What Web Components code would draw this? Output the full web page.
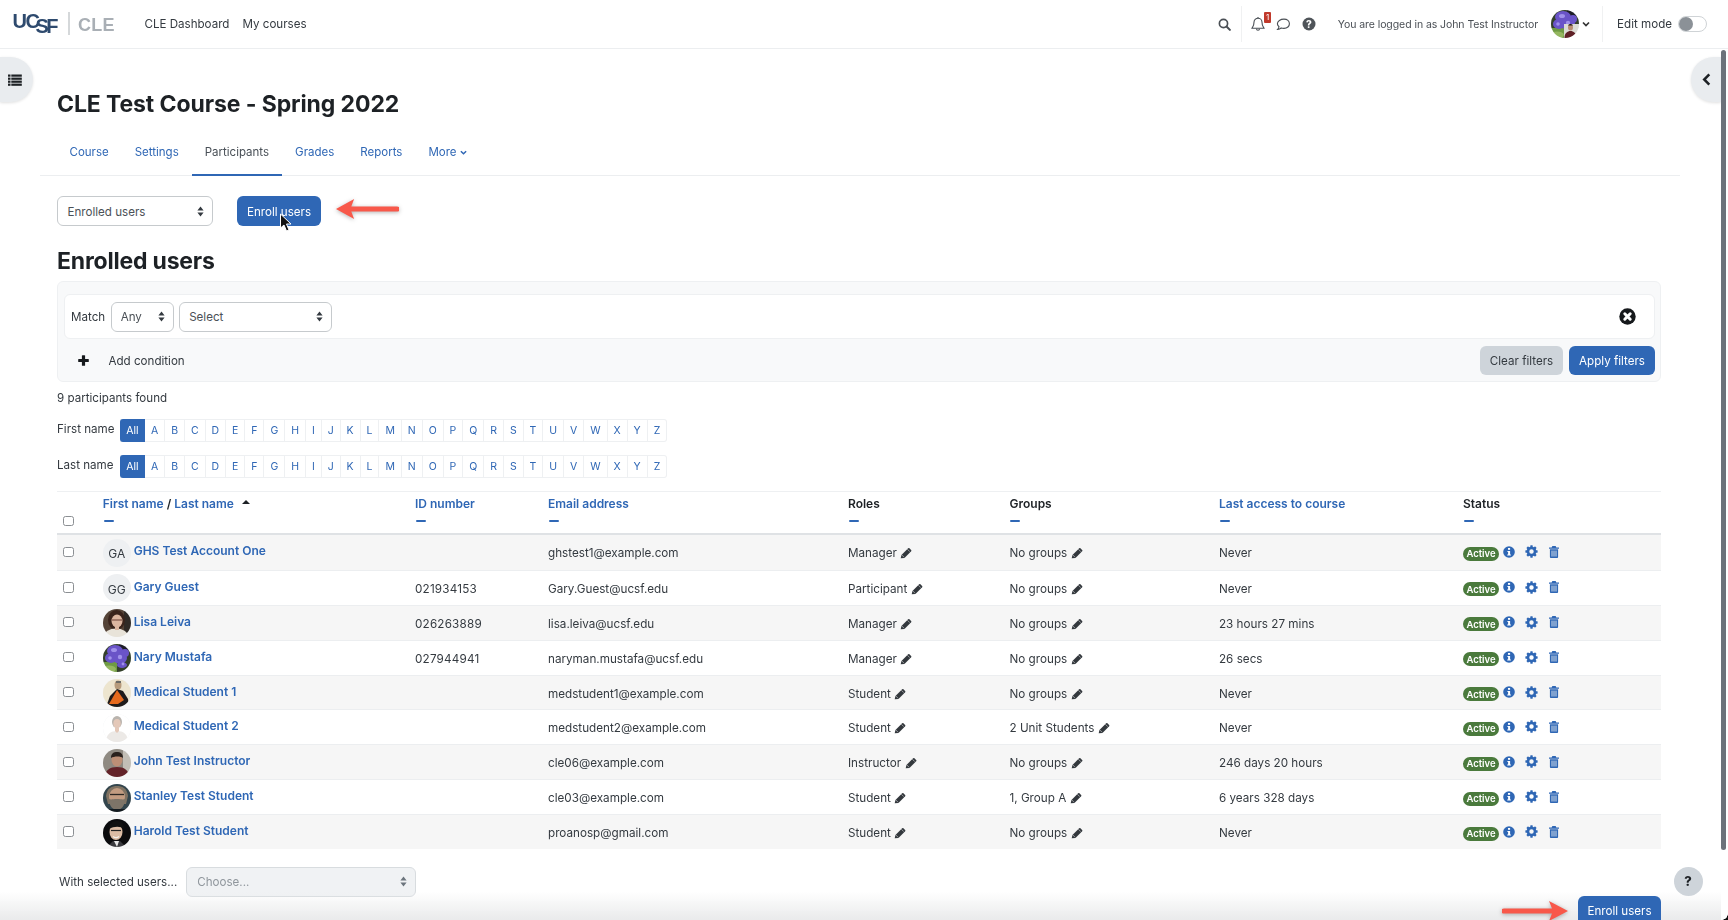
<!DOCTYPE html>
<html lang="en"><head><meta charset="utf-8"><title>Participants</title>
<style>
html,body{margin:0;padding:0;width:1728px;height:920px;overflow:hidden;background:#fff;font-family:Inter,"Liberation Sans",sans-serif;color:#1d2125}
</style></head><body>
<app-page></app-page>
<script>
const BLUE='#2f67b5';
const I={
search:(s=13,c='#4a4f55')=>`<svg width="${s}" height="${s}" viewBox="0 0 14 14" fill="none" stroke="${c}"><circle cx="5.900" cy="5.900" r="4.400" stroke-width="1.800"/><path d="M9.200 9.200 12.800 12.800" stroke-width="2.200" stroke-linecap="round"/></svg>`,
bell:`<svg width="14" height="16" viewBox="0 0 14 15" fill="none" stroke="#4a4f55" stroke-width="1.100"><path d="M7 1.700a4 4 0 0 0-4 4c0 3.800-1.400 5-2 6h12c-.6-1-2-2.200-2-6a4 4 0 0 0-4-4z"/><path d="M5.500 12.200a1.500 1.500 0 0 0 3 0"/><path d="M7 .6v1.100"/></svg>`,
comment:`<svg width="15" height="15" viewBox="0 0 16 15" fill="none" stroke="#4a4f55" stroke-width="1.200"><path d="M8.500 1.800C4.800 1.800 1.500 3.900 1.500 6.700c0 1.300.7 2.400 1.700 3.200-.2 1.100-.7 2-1.400 2.800 1.400-.1 2.700-.7 3.700-1.500.9.3 2 .4 3 .4 3.500 0 5.800-2.200 5.800-4.900s-2.300-4.900-5.800-4.900z"/></svg>`,
help:`<svg width="14" height="14" viewBox="0 0 14 14"><circle cx="7" cy="7" r="6.500" fill="#4f5459"/><text x="7" y="10.600" text-anchor="middle" font-family="Inter,sans-serif" font-size="10" font-weight="800" fill="#fff">?</text></svg>`,
chev:(c='#333',s=8)=>`<svg width="${s}" height="${s}" viewBox="0 0 8 8" fill="none" stroke="${c}" stroke-width="1.700"><path d="M1 2.500 4 5.500 7 2.500"/></svg>`,
updown:(c='#343a40')=>`<svg width="7" height="11" viewBox="0 0 7 11" fill="${c}"><path d="M3.500 .6 6.600 4.500H.4zM3.500 10.400.4 6.500h6.200z"/></svg>`,
pencil:`<svg width="12" height="12" viewBox="0 0 14 14"><path fill="#33383d" d="M.8 13.200l.9-3.900L9.500 1.500a1.100 1.100 0 0 1 1.500 0l2 2a1.100 1.100 0 0 1 0 1.500L5.200 12.800z"/><path stroke="#fff" stroke-width=".6" d="M2 9.200 4.800 12M8.600 2.600 11.400 5.400"/></svg>`,
info:`<svg width="12" height="12" viewBox="0 0 12 12"><circle cx="6" cy="6" r="5.800" fill="${BLUE}"/><rect x="5" y="2" width="2.100" height="1.800" fill="#fff"/><path fill="#fff" d="M4.400 4.900h2.700v3.500h.8v1.100H4.200V8.400h.9V6H4.400z"/></svg>`,
gear:`<svg width="13" height="13" viewBox="0 0 14 14" fill="${BLUE}"><circle cx="7" cy="7" r="3.800" fill="none" stroke="${BLUE}" stroke-width="2.800"/>${[0,45,90,135,180,225,270,315].map(a=>`<rect x="5.700" y=".4" width="2.600" height="3" rx=".4" transform="rotate(${a} 7 7)"/>`).join('')}</svg>`,
trash:`<svg width="10" height="12" viewBox="0 0 11 13"><path fill="${BLUE}" d="M3.700 0h3.600l.8 1.600H11v1.300H0V1.600h2.900zM1 3.600h9V12a1 1 0 0 1-1 1H2a1 1 0 0 1-1-1z"/><path stroke="#f6f6f6" stroke-width=".9" d="M3.300 5v6.500M5.500 5v6.500M7.700 5v6.500"/></svg>`,
list:`<svg width="14" height="12" viewBox="0 0 14 12" fill="#1d2125"><rect x="0" y=".5" width="2.500" height="2.200"/><rect x="0" y="3.600" width="2.500" height="2.200"/><rect x="0" y="6.600" width="2.500" height="2.200"/><rect x="0" y="9.600" width="2.500" height="2.200"/><rect x="3.300" y=".5" width="10.500" height="2.200"/><rect x="3.300" y="3.600" width="10.500" height="2.200"/><rect x="3.300" y="6.600" width="10.500" height="2.200"/><rect x="3.300" y="9.600" width="10.500" height="2.200"/></svg>`,
back:`<svg width="9" height="13" viewBox="0 0 9 13" fill="none" stroke="#1d2125" stroke-width="2.500"><path d="M7.300 1.300 2.200 6.500 7.300 11.700"/></svg>`,
xc:`<svg width="17" height="17" viewBox="0 0 17 17"><circle cx="8.500" cy="8.500" r="8.200" fill="#16191c"/><path stroke="#fff" stroke-width="3" stroke-linecap="round" d="M5.800 5.800 11.200 11.200M11.200 5.800 5.800 11.200"/></svg>`,
plus:`<svg width="11" height="11" viewBox="0 0 11 11" fill="#16191c"><rect x="3.900" y=".2" width="3.200" height="10.600" rx=".6"/><rect x=".2" y="3.900" width="10.600" height="3.200" rx=".6"/></svg>`
};
const flower=`<rect width="28" height="28" fill="#34402a"/><rect y="18" width="14" height="10" fill="#6f9a44"/><ellipse cx="6" cy="25" rx="7" ry="3.500" fill="#95b760"/><rect x="16" width="12" height="6" fill="#1e1e28"/><g fill="#6a54c8"><ellipse cx="12" cy="7" rx="8" ry="6"/><ellipse cx="8" cy="14" rx="6" ry="5"/><ellipse cx="17" cy="14" rx="7" ry="6"/><ellipse cx="22" cy="9" rx="4" ry="4"/><ellipse cx="19" cy="21" rx="5" ry="3"/></g><g fill="#a091ea"><ellipse cx="11" cy="6" rx="3" ry="2"/><circle cx="17" cy="13" r="2.200"/><circle cx="7" cy="14" r="1.800"/><circle cx="20" cy="20" r="1.400"/></g>`;
const AV={
lisa:`<rect width="28" height="28" fill="#544337"/><rect x="21" width="7" height="28" fill="#2f2a26"/><ellipse cx="13.500" cy="11" rx="8.500" ry="10" fill="#3a241c"/><ellipse cx="14" cy="12" rx="5.500" ry="6.500" fill="#dcb6a0"/><path d="M9 11h10" stroke="#6a3f35" stroke-width="1"/><ellipse cx="13" cy="27" rx="12" ry="7.500" fill="#e8e3d9"/><rect x="12" y="17" width="4" height="4" fill="#dcb6a0"/>`,
nary:flower,
med1:`<rect width="28" height="28" fill="#ede5cf"/><ellipse cx="15" cy="6" rx="3.500" ry="4.500" fill="#b79b7c"/><path d="M13 2h5v2h-5z" fill="#6b6b66"/><path d="M3 28 7 17 14 10 20 12 25 20 26 28z" fill="#1f1b1b"/><path d="M6 25 14 11 21 21 15 25z" fill="#e56a1e"/>`,
med2:`<rect width="28" height="28" fill="#fff"/><ellipse cx="14" cy="8" rx="5" ry="6" fill="#b9b4ae"/><ellipse cx="14" cy="9.500" rx="3.700" ry="4.500" fill="#e4c8b8"/><path d="M3 28c0-8 5-11 11-11s11 3 11 11z" fill="#ece9e6"/><path d="M12 14h4v3l-2 2-2-2z" fill="#e4c8b8"/>`,
john:`<rect width="28" height="28" fill="#8f8a82"/><rect x="20" width="8" height="28" fill="#c2beb6"/><ellipse cx="14" cy="11" rx="5.500" ry="6.500" fill="#bd8f76"/><path d="M8 9c0-5 3-6 6-6s6 1 6 6c-2-2-9-2-12 0z" fill="#2a211d"/><path d="M2 28c0-7 5-10 12-10s12 3 12 10z" fill="#632329"/>`,
stanley:`<rect width="28" height="28" fill="#33454d"/><path d="M3 12c1-8 6-10 11-10s10 2 11 10l-2 8H5z" fill="#7f7262"/><ellipse cx="14" cy="13" rx="8" ry="9" fill="#c39c81"/><path d="M7 10.500h14" stroke="#2c2825" stroke-width="1.300"/><path d="M6 15c2 1 4 0 8 0s6 1 8 0c0 7-4 11-8 11s-8-4-8-11z" fill="#7d7468"/><rect y="25" width="28" height="3" fill="#141b20"/>`,
harold:`<rect width="28" height="28" fill="#0b0b0d"/><ellipse cx="13" cy="13" rx="6.500" ry="8" fill="#dcbca4"/><path d="M6 10c0-6 4-8 8-8s7 2 7 8c-3-3-10-3-15 0z" fill="#111"/><path d="M8 11.500h10" stroke="#222" stroke-width="1.200"/><path d="M10 17.500c2 1.500 4 1.500 6 0" stroke="#f5f0ea" stroke-width="1.200" fill="none"/><path d="M4 28l6-6h7l6 6z" fill="#3a3a3e"/><path d="M11 22h5l-2 6z" fill="#e8e8e8"/>`,
self:flower+`<rect x="13" y="14" width="15" height="14" fill="#dcdcd6"/><ellipse cx="19.500" cy="17.500" rx="2.500" ry="3" fill="#b98c72"/><path d="M17 15.500c1-2 4-2 5 0z" fill="#221b18"/><path d="M13.500 28c0-5 3-7 6-7s6 2 6 7z" fill="#5f2026"/>`
};
class Base extends HTMLElement{
  constructor(){super();this.attachShadow({mode:'open'})}
  html(css,body){this.shadowRoot.innerHTML=`<style>${css}</style>${body}`}
  a(n,d=''){const v=this.getAttribute(n);return v==null?d:v}
}
class UAvatar extends Base{connectedCallback(){
  const k=this.a('kind'),t=this.a('initials'),s=this.a('size','28');
  this.html(`:host{display:block;width:${s}px;height:${s}px;border-radius:50%;overflow:hidden;background:#eef0f2;flex:none}
  div{width:100%;height:100%;display:flex;align-items:center;justify-content:center;font-size:12px;color:#343a40;padding-top:2px;box-sizing:border-box}svg{display:block;filter:blur(.5px)}`,
  k?`<svg width="${s}" height="${s}" viewBox="0 0 28 28">${AV[k]}</svg>`:`<div>${t}</div>`);
}}
class XSelect extends Base{connectedCallback(){
  const dis=this.hasAttribute('disabled');
  this.html(`:host{display:flex;box-sizing:border-box;align-items:center;justify-content:space-between;width:${this.a('w')}px;height:${this.a('h','30')}px;padding:0 ${this.a('pr','8')}px 0 ${this.a('pl','9')}px;border:1px solid ${dis?'#d8dcdf':'#c6cacd'};border-radius:6px;background:${dis?'#f0f2f4':'#fff'};color:${dis?'#8f969c':'#4b5157'};font-size:11.600px}
  span{padding-top:1px}`,
  `<span>${this.a('label')}</span>${I.updown(dis?'#6c757d':'#343a40')}`);
}}
class XBtn extends Base{connectedCallback(){
  const g=this.hasAttribute('secondary');
  this.html(`:host{display:flex;box-sizing:border-box;align-items:center;justify-content:center;width:${this.a('w')}px;height:${this.a('h','29')}px;padding-top:1px;border-radius:6px;background:${g?'#ced4da':BLUE};color:${g?'#343a40':'#fff'};font-size:11.600px;white-space:nowrap}`,`<slot></slot>`);
}}
class CleLogo extends Base{connectedCallback(){
  this.html(`:host{display:flex;align-items:flex-start;height:48px;padding-left:12.500px;font-family:"Liberation Sans",sans-serif;flex:none}
  .u{display:flex;color:#2e4a6e;font-weight:700;font-size:20px;line-height:1;letter-spacing:-1.500px;width:46px;padding-top:11px}
  .u i{font-style:normal;display:block}.s{position:relative;top:5px;margin-left:-3px}.f{position:relative;top:5px;margin-left:-1px}
  .sep{width:2px;height:23px;background:#d5d8da;margin:12px 8px 0 9.500px}
  .c{font-size:18px;line-height:1;font-weight:700;color:#a9afb5;padding-top:16px;letter-spacing:.3px}`,
  `<div class="u"><i>U</i><i>C</i><i class="s">S</i><i class="f">F</i></div><div class="sep"></div><div class="c">CLE</div>`);
}}
class AppHeader extends Base{connectedCallback(){
  this.html(`:host{display:flex;box-sizing:border-box;height:49px;border-bottom:1px solid #eceef0;align-items:center;background:#fff;font-size:11.600px;color:#343a40}
  nav{display:flex;gap:13px;margin-left:29.500px;flex:1}
  .ic{display:flex;align-items:center}
  .sep{width:1px;height:36px;background:#f0f1f2}
  .bell{position:relative;display:flex}
  .bd{position:absolute;left:13.500px;top:-4px;width:7px;height:11px;background:#c0392b;color:#fff;font-size:8px;line-height:11px;text-align:center;border-radius:1px}
  .t{font-size:10.500px;letter-spacing:-.07px;color:#4a4f55;white-space:nowrap}
  .sw{width:29px;height:16px;box-sizing:border-box;border:1px solid #cfd3d6;border-radius:8px;position:relative;background:#fff;margin-left:6px}
  .sw i{position:absolute;left:0;top:0;width:14px;height:14px;border-radius:50%;background:#8b9197}
  `,`<cle-logo></cle-logo><nav><span>CLE Dashboard</span><span>My courses</span></nav>
  <div class="ic" style="margin-right:10.500px">${I.search()}</div><div class="sep"></div>
  <div class="bell" style="margin-left:8.500px">${I.bell}<span class="bd">1</span></div>
  <div class="ic" style="margin-left:11px">${I.comment}</div>
  <div class="ic" style="margin-left:11px">${I.help}</div>
  <span class="t" style="margin-left:22px">You are logged in as John Test Instructor</span>
  <u-avatar kind="self" style="margin-left:13px"></u-avatar>
  <div class="ic" style="margin-left:3px">${I.chev()}</div>
  <div class="sep" style="margin-left:12px"></div>
  <span style="margin-left:14px">Edit mode</span><div class="sw" style="margin-right:21px"><i></i></div>`);
}}
class CourseTabs extends Base{connectedCallback(){
  this.html(`:host{display:flex;box-sizing:border-box;height:44px;margin:13px -19px 0 -17px;padding-left:16.500px;border-bottom:1px solid #eceef0;font-size:11.500px;color:${BLUE}}
  a{display:flex;align-items:flex-start;padding:11px 13px 0;line-height:18px;height:44px;box-sizing:border-box;gap:3px}
  a.on{color:#495057;border-bottom:2px solid ${BLUE}}
  svg{margin-top:5.500px}`,
  `<a>Course</a><a>Settings</a><a class="on">Participants</a><a>Grades</a><a>Reports</a><a>More${I.chev(BLUE,7)}</a>`);
}}
class FilterBox extends Base{connectedCallback(){
  this.html(`:host{display:block;box-sizing:border-box;height:101px;margin-top:4.500px;padding:12.500px 5px 0 5.500px;background:#f8f9fa;border:1px solid #eef0f2;border-radius:6px;font-size:11.600px;color:#343a40}
  .r{display:flex;align-items:center;height:45px;box-sizing:border-box;background:#fff;border:1px solid #eef0f2;border-radius:6px;padding:0 18px 0 6.500px;gap:5.500px}
  .x{margin-left:auto;display:flex}
  .b{display:flex;align-items:center;margin-top:7px}
  .b .p{display:flex;margin-left:14px}.b .l{margin-left:20px;flex:1}
  x-btn+x-btn{margin-left:6px}`,
  `<div class="r"><span>Match</span><x-select label="Any" w="63" h="30" pr="8"></x-select><x-select label="Select" w="153" h="30"></x-select><span class="x">${I.xc}</span></div>
  <div class="b"><span class="p">${I.plus}</span><span class="l">Add condition</span><x-btn secondary w="83">Clear filters</x-btn><x-btn w="86">Apply filters</x-btn></div>`);
}}
class AlphaBar extends Base{connectedCallback(){
  const L='ABCDEFGHIJKLMNOPQRSTUVWXYZ'.split('');
  this.html(`:host{display:flex;align-items:center;height:23px;font-size:11.600px;color:#343a40;margin-top:${this.a('mt','0')}px}
  .lb{width:${this.a('lw','63')}px;padding-bottom:4px;flex:none}
  .bar{display:flex;height:23px;border:1px solid #eef0f2;border-left:0;border-radius:0 3px 3px 0;box-sizing:border-box;color:${BLUE};font-size:10.500px;width:547px}
  .bar a{flex:1 1 auto;display:flex;align-items:center;justify-content:center;border-right:1px solid #eef0f2;padding:0 3px}
  .bar a:last-child{border-right:0}
  .bar a.all{flex:none;width:25px;padding:0;box-sizing:border-box;background:${BLUE};color:#fff;border:0;border-radius:3px 0 0 3px;margin:-1px 0}`,
  `<span class="lb">${this.a('label')}</span><div class="bar"><a class="all">All</a>${L.map(c=>`<a>${c}</a>`).join('')}</div>`);
}}
const COLS='45.700px 312.300px 133px 300px 161.500px 209.500px 244px 198px';
class TableHead extends Base{connectedCallback(){
  const h=(t,on)=>`<div class="h"><div class="t ${on?'lk':''}">${t}</div><i></i></div>`;
  this.html(`:host{display:grid;grid-template-columns:${COLS};height:44px;box-sizing:border-box;border-top:1px solid #eef0f2;border-bottom:2px solid #dfe2e5;margin-top:13px;font-size:12px;font-weight:600;color:#1d2125}
  .h{padding-top:4px;position:relative}.t{line-height:15px;white-space:nowrap}.lk{color:${BLUE}}.t b{color:#1d2125;font-weight:600}
  .h i{display:block;width:10px;height:2.500px;background:${BLUE};border-radius:1px;margin:8.500px 0 0 1px}
  .c{display:flex;align-items:flex-start;padding:23.500px 0 0 6px}
  .cb{width:10.500px;height:10.500px;border:1.200px solid #8b8f93;border-radius:2.500px;background:#fff;box-sizing:border-box}
  .up{display:inline-block;width:0;height:0;border:4px solid transparent;border-bottom:4.500px solid #1d2125;border-top:0;margin-left:5px;vertical-align:4px}`,
  `<div class="c"><div class="cb"></div></div>`+h('First name <b>/</b> Last name <span class="up"></span>',1)+h('ID number',1)+h('Email address',1)+h('Roles')+h('Groups')+h('Last access to course',1)+h('Status'));
}}
class UserRow extends Base{connectedCallback(){
  const av=this.a('av');
  this.html(`:host{display:grid;grid-template-columns:${COLS};height:34.900px;box-sizing:border-box;border-top:1px solid #eceef0;align-items:center;font-size:11.700px;color:#343a40}
  :host([striped]){background:#f6f6f6}
  :host(:first-of-type){border-top:0}
  .c{padding-left:6px}.cb{width:10.500px;height:10.500px;border:1.200px solid #8b8f93;border-radius:2.500px;background:#fff;box-sizing:border-box;margin-bottom:1px}
  .n{display:flex;align-items:center;gap:3px}.n b{color:${BLUE};font-weight:600;font-size:12px;margin-bottom:3px;white-space:nowrap}
  .d{padding-top:2px;white-space:nowrap;display:flex;align-items:center;gap:3.500px}
  .id{letter-spacing:.2px}
  .s{display:flex;align-items:center;height:100%}
  .ac{width:36px;height:14px;border-radius:7px;background:#4a7a3c;color:#fff;font-size:9.500px;font-weight:600;display:flex;align-items:center;justify-content:center;margin-top:3px}
  .s svg{display:block;margin-bottom:1px}`,
  `<div class="c"><div class="cb"></div></div><div class="n"><u-avatar ${av.length>2?`kind="${av}"`:`initials="${av}"`} style="margin-top:1px"></u-avatar><b>${this.a('name')}</b></div>
  <div class="d id">${this.a('uid')}</div><div class="d">${this.a('email')}</div>
  <div class="d">${this.a('role')} ${I.pencil}</div><div class="d">${this.a('grp')} ${I.pencil}</div><div class="d">${this.a('acc')}</div>
  <div class="s"><span class="ac">Active</span><span style="margin-left:4.500px">${I.info}</span><span style="margin-left:10px">${I.gear}</span><span style="margin-left:11px">${I.trash}</span></div>`);
}}
class RedArrow extends Base{connectedCallback(){
  const d=this.a('dir'),w=this.a('w','66');
  this.html(`:host{position:absolute;display:block;filter:drop-shadow(0 1px 2px rgba(0,0,0,.3))}svg{display:block}`,
  `<svg width="${w}" height="20" viewBox="0 0 66 20" preserveAspectRatio="none" style="${d=='r'?'':'transform:scaleX(-1)'}"><path d="M2 7.400H50L47 0 66 10 47 20 50 12.600H2A2.600 2.600 0 0 1 2 7.400z" fill="#f8584a"/></svg>`);
}}
class AppPage extends Base{connectedCallback(){
  const R=[
  ['GA','GHS Test Account One','','ghstest1@example.com','Manager','No groups','Never'],
  ['GG','Gary Guest','021934153','Gary.Guest@ucsf.edu','Participant','No groups','Never'],
  ['lisa','Lisa Leiva','026263889','lisa.leiva@ucsf.edu','Manager','No groups','23 hours 27 mins'],
  ['nary','Nary Mustafa','027944941','naryman.mustafa@ucsf.edu','Manager','No groups','26 secs'],
  ['med1','Medical Student 1','','medstudent1@example.com','Student','No groups','Never'],
  ['med2','Medical Student 2','','medstudent2@example.com','Student','2 Unit Students','Never'],
  ['john','John Test Instructor','','cle06@example.com','Instructor','No groups','246 days 20 hours'],
  ['stanley','Stanley Test Student','','cle03@example.com','Student','1, Group A','6 years 328 days'],
  ['harold','Harold Test Student','','proanosp@gmail.com','Student','No groups','Never']];
  this.html(`:host{display:block;position:relative;width:1728px;height:920px;overflow:hidden;filter:blur(.4px)}
  main{padding:0 67px 0 57px}
  h1{margin:40px 0 0;font-size:23px;line-height:30px;font-weight:700;color:#1d2125;letter-spacing:-.1px}
  h2{margin:20px 0 0;font-size:23px;line-height:30px;font-weight:700;color:#1d2125;letter-spacing:-.2px}
  .act{display:flex;align-items:center;margin-top:20px;gap:24px}
  .found{margin-top:7.500px;font-size:11.600px;line-height:18px;color:#343a40}
  .sel{display:flex;align-items:center;margin-top:17.500px;font-size:11.600px;color:#343a40;padding-left:2px}
  .toggle{position:absolute;top:57px;height:45px;background:#e9ecef;display:flex;align-items:center}
  .tl{left:0;width:33px;border-radius:0 23px 23px 0;justify-content:flex-start;padding-left:8px;box-sizing:border-box;box-shadow:0 1px 3px rgba(0,0,0,.12)}
  .tr{left:1691px;width:30px;border-radius:23px 0 0 23px;padding-left:11px;box-sizing:border-box;box-shadow:0 1px 3px rgba(0,0,0,.12)}
  .sb{position:absolute;left:1721px;top:50px;width:5px;height:800px;background:#6c727a;border-radius:3px}
  .foot{position:absolute;left:0;right:7px;bottom:0;height:28px;background:linear-gradient(rgba(236,237,238,0),#e9eaeb)}
  .enr{position:absolute;left:1578px;top:896px}
  .hp{position:absolute;left:1673.500px;top:866.500px;width:29px;height:29px;border-radius:50%;background:#ced4da;display:flex;align-items:center;justify-content:center;font-weight:800;font-size:13px;color:#1d2125}
  .cur{position:absolute;left:279px;top:213px}
  .cn{position:absolute;left:1722px;top:914px;width:6px;height:6px;background:radial-gradient(circle at 0 0,transparent 5.500px,#111 6px)}`,
  `<app-header></app-header>
  <main>
   <h1>CLE Test Course - Spring 2022</h1>
   <course-tabs></course-tabs>
   <div class="act"><x-select label="Enrolled users" w="156" h="30" pl="9.500"></x-select><x-btn w="84" h="29.500">Enroll users</x-btn></div>
   <h2>Enrolled users</h2>
   <filter-box></filter-box>
   <div class="found">9 participants found</div>
   <alpha-bar label="First name" mt="12"></alpha-bar>
   <alpha-bar label="Last name" lw="63" mt="13"></alpha-bar>
   <table-head></table-head>
   <div id="rows">${R.map((r,i)=>`<user-row ${i%2==0?'striped':''} av="${r[0]}" name="${r[1]}" uid="${r[2]}" email="${r[3]}" role="${r[4]}" grp="${r[5]}" acc="${r[6]}"></user-row>`).join('')}</div>
   <div class="sel"><span style="margin-right:9px">With selected users...</span><x-select disabled label="Choose..." w="230" h="30" pl="10"></x-select></div>
  </main>
  <div class="toggle tl">${I.list}</div><div class="toggle tr">${I.back}</div>
  <div class="sb"></div><div class="foot"></div>
  <x-btn class="enr" w="83" h="29">Enroll users</x-btn>
  <div class="hp">?</div>
  <red-arrow dir="l" w="63" style="left:336px;top:199px"></red-arrow>
  <red-arrow dir="r" style="left:1502px;top:901px"></red-arrow>
  <svg class="cur" width="14" height="20" viewBox="0 0 14 20"><path d="M1.500 1v14l3.500-3 2.500 6 2.500-1-2.500-6h4.500z" fill="#111" stroke="#fff" stroke-width="1"/></svg>
  <div class="cn"></div>`);
}}
[['u-avatar',UAvatar],['x-select',XSelect],['x-btn',XBtn],['cle-logo',CleLogo],['app-header',AppHeader],['course-tabs',CourseTabs],['filter-box',FilterBox],['alpha-bar',AlphaBar],['table-head',TableHead],['user-row',UserRow],['red-arrow',RedArrow],['app-page',AppPage]].forEach(([n,c])=>customElements.define(n,c));
</script>
</body></html>
